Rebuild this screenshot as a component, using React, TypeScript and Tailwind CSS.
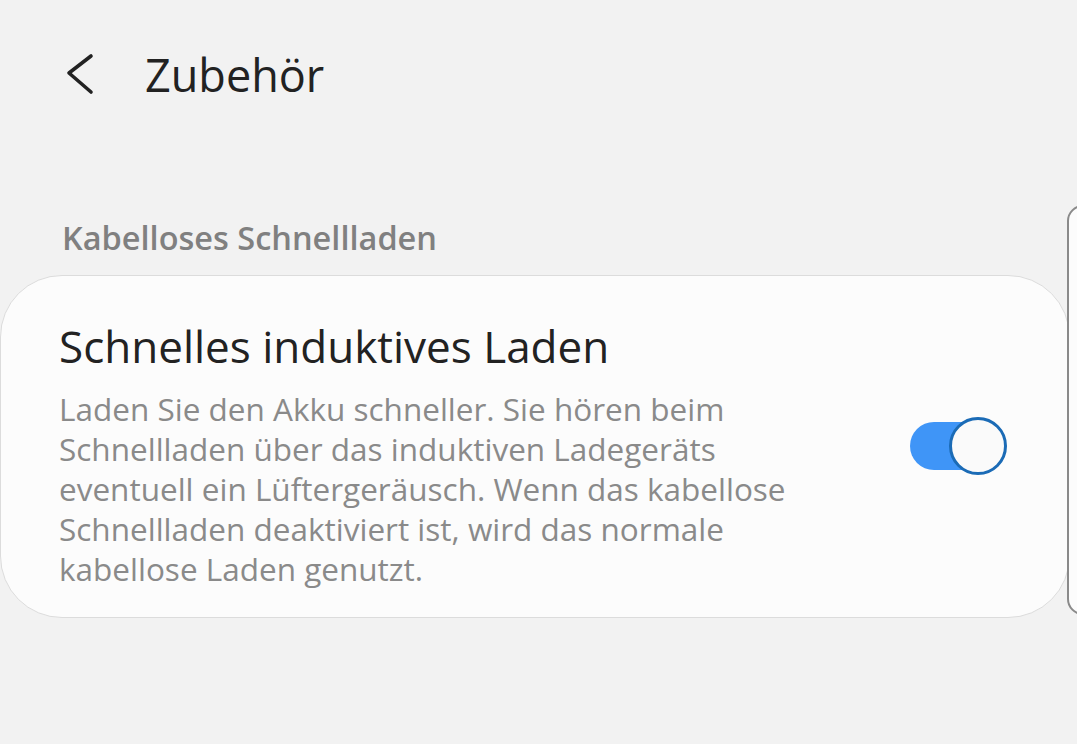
import React from 'react'

const font = { fontFamily: '"Open Sans", "Noto Sans", sans-serif' }

const descLines = [
  'Laden Sie den Akku schneller. Sie hören beim',
  'Schnellladen über das induktiven Ladegeräts',
  'eventuell ein Lüftergeräusch. Wenn das kabellose',
  'Schnellladen deaktiviert ist, wird das normale',
  'kabellose Laden genutzt.',
]

function BackIcon() {
  return (
    <svg width="30" height="44" viewBox="0 0 30 44" className="shrink-0">
      <path d="M25 3 L3 20 L25 39" fill="none" stroke="#222" strokeWidth="3.6" strokeLinecap="round" strokeLinejoin="round" />
    </svg>
  )
}

function Toggle({ on }: { on: boolean }) {
  return (
    <div className="relative w-[97px] h-[58px] shrink-0 mt-[96px]">
      <div className={on ? 'absolute left-0 top-[5px] w-[80px] h-[48px] rounded-full bg-[#3f95f7]' : 'absolute left-0 top-[5px] w-[80px] h-[48px] rounded-full bg-[#ccc]'} />
      <div className="absolute right-0 top-0 w-[58px] h-[58px] rounded-full bg-[#fafafa] border-[3.5px] border-[#1b6bb6]" />
    </div>
  )
}

export default function App() {
  return (
    <div className="relative w-[1077px] h-[744px] overflow-hidden bg-[#f2f2f2]" style={font}>
      {/* Header */}
      <div className="flex items-center h-[150px] pl-[66px]">
        <BackIcon />
        <span className="ml-[49px] text-[45px] leading-[44px] text-[#222]">Zubehör</span>
      </div>

      {/* Section */}
      <div className="pl-[62px] pt-[68px] pb-[17px] text-[32.5px] leading-[40px] font-semibold text-[#808080] whitespace-nowrap">
        Kabelloses Schnellladen
      </div>

      {/* Card */}
      <div className="w-[1070px] h-[343px] rounded-[62px] bg-[#fcfcfc] border border-[#dcdcdc] flex items-start pt-[45px] pl-[58px] pr-[62px]">
        <div className="flex-1">
          <div className="text-[44px] leading-[50px] text-[#222] whitespace-nowrap">Schnelles induktives Laden</div>
          <div className="mt-[18px] text-[31.5px] leading-[40px] text-[#8a8a8a] whitespace-nowrap">
            {descLines.map((l) => (
              <div key={l}>{l}</div>
            ))}
          </div>
        </div>
        <Toggle on />
      </div>

      {/* Edge of next panel */}
      <div className="absolute left-[1067px] top-[205px] w-[40px] h-[410px] rounded-[16px] border-2 border-[#8a8a8a] bg-[#fcfcfc]" />
    </div>
  )
}
